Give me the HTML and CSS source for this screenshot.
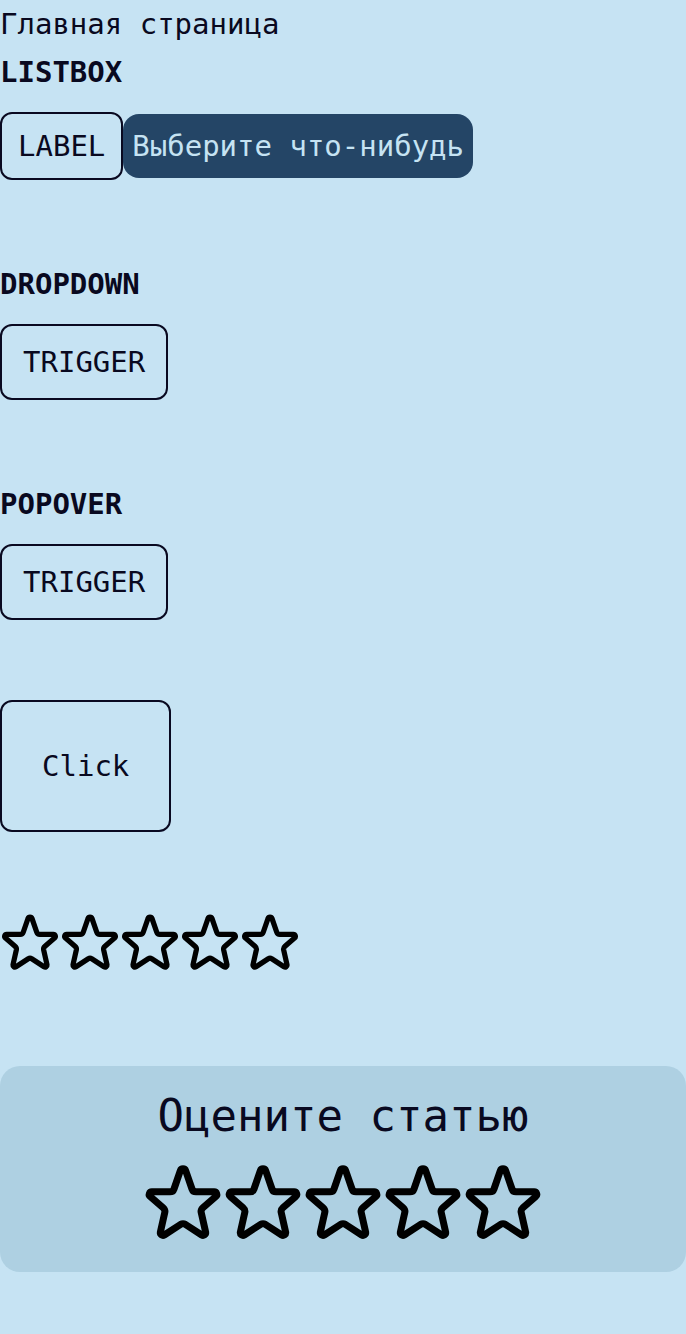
FILE: index.html
```html
<!DOCTYPE html>
<html lang="ru">
<head>
<meta charset="utf-8">
<meta name="viewport" content="width=device-width, initial-scale=1">
<title>Главная страница</title>
<link rel="stylesheet" href="styles.css">
</head>
<body>
<svg class="sprite" aria-hidden="true">
  <symbol id="star" viewBox="0 0 24 24">
    <path d="M11.2 2.6A.85 .85 0 0 1 12.8 2.6L14.7 8.1Q15 8.95 15.9 8.95H21.3A.8 .8 0 0 1 21.8 10.4L18 13.7Q17.3 14.3 17.45 15.1L18.8 21.1A.8 .8 0 0 1 17.6 21.9L12.7 18.7Q12 18.3 11.3 18.7L6.4 21.9A.8 .8 0 0 1 5.2 21.1L6.55 15.1Q6.7 14.3 6 13.7L2.2 10.4A.8 .8 0 0 1 2.7 8.95H8.1Q9 8.95 9.3 8.1Z" fill="none" stroke="currentColor" stroke-width="2.1" stroke-linejoin="round"/>
  </symbol>
</svg>
<main class="page">
  <p class="title">Главная страница</p>
  <section class="section">
    <h2 class="heading">LISTBOX</h2>
    <div class="listbox">
      <span class="label" id="listbox-label">LABEL</span>
      <button class="select" type="button" aria-haspopup="listbox" aria-labelledby="listbox-label listbox-value"><span id="listbox-value">Выберите что-нибудь</span></button>
    </div>
  </section>
  <section class="section">
    <h2 class="heading">DROPDOWN</h2>
    <button class="trigger" type="button">TRIGGER</button>
  </section>
  <section class="section">
    <h2 class="heading">POPOVER</h2>
    <button class="trigger" type="button">TRIGGER</button>
  </section>
  <button class="trigger trigger-large" type="button">Click</button>
  <div class="stars">
    <button class="star" type="button" aria-label="1"><svg><use href="#star"/></svg></button>
    <button class="star" type="button" aria-label="2"><svg><use href="#star"/></svg></button>
    <button class="star" type="button" aria-label="3"><svg><use href="#star"/></svg></button>
    <button class="star" type="button" aria-label="4"><svg><use href="#star"/></svg></button>
    <button class="star" type="button" aria-label="5"><svg><use href="#star"/></svg></button>
  </div>
  <section class="card">
    <h2 class="card-title">Оцените статью</h2>
    <div class="stars stars-large">
      <button class="star" type="button" aria-label="1"><svg><use href="#star"/></svg></button>
      <button class="star" type="button" aria-label="2"><svg><use href="#star"/></svg></button>
      <button class="star" type="button" aria-label="3"><svg><use href="#star"/></svg></button>
      <button class="star" type="button" aria-label="4"><svg><use href="#star"/></svg></button>
      <button class="star" type="button" aria-label="5"><svg><use href="#star"/></svg></button>
    </div>
  </section>
</main>
</body>
</html>
```
FILE: styles.css
```css
* {
  box-sizing: border-box;
}

body {
  margin: 0;
  background: #c6e3f3;
  color: #090920;
  font: 29px/48px "DejaVu Sans Mono", monospace;
}

button {
  font: inherit;
  color: inherit;
  background: none;
  border: 0;
  padding: 0;
  cursor: pointer;
}

.sprite {
  display: none;
}

.page {
  display: flex;
  flex-direction: column;
  align-items: flex-start;
}

.title,
.heading {
  margin: 0;
}

.heading {
  font-size: 29px;
  font-weight: 700;
}

.section {
  display: flex;
  flex-direction: column;
  align-items: flex-start;
  gap: 16px;
  margin-bottom: 80px;
}

.listbox {
  display: flex;
  align-items: center;
}

.label,
.trigger {
  border: 2px solid #090920;
  border-radius: 12px;
}

.label {
  padding: 8px 16px;
}

.select {
  padding: 8px 9px;
  border-radius: 16px;
  background: #244566;
  color: #c6e3f3;
}

.trigger {
  padding: 12px 21px;
}

.trigger-large {
  padding: 40px;
  margin-bottom: 80px;
}

.stars {
  display: flex;
}

.star {
  width: 60px;
  height: 60px;
  color: #000;
}

.star svg {
  display: block;
  width: 100%;
  height: 100%;
}

.stars-large .star {
  width: 80px;
  height: 80px;
}

.card {
  align-self: stretch;
  display: flex;
  flex-direction: column;
  align-items: center;
  margin-top: 94px;
  padding: 20px 20px 30px;
  border-radius: 20px;
  background: #aed0e2;
}

.card-title {
  margin: 0 0 16px;
  font-size: 44px;
  font-weight: 400;
  line-height: 60px;
}
```
